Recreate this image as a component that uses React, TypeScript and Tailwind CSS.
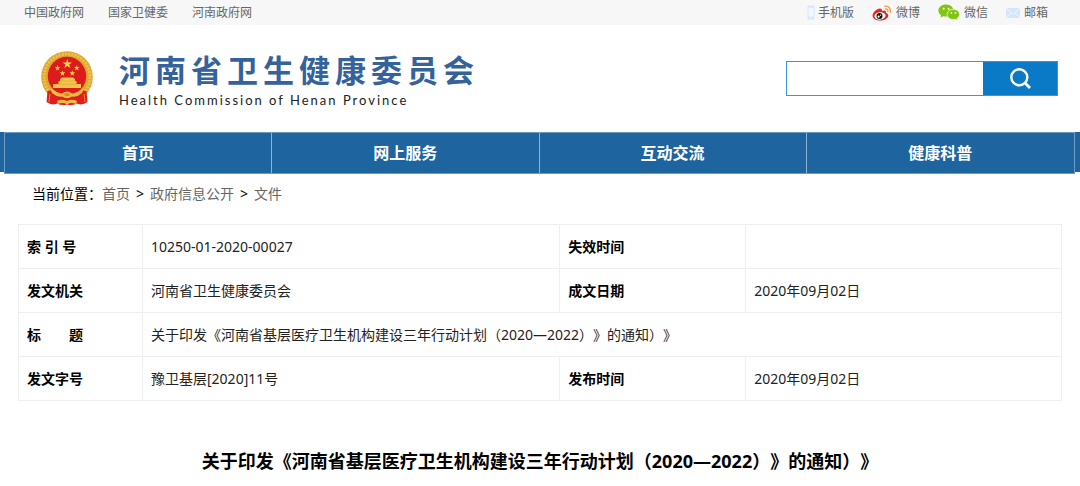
import React from "react";

const STAR = "0,-1 0.235,-0.324 0.951,-0.309 0.38,0.124 0.588,0.809 0,0.4 -0.588,0.809 -0.38,0.124 -0.951,-0.309 -0.235,-0.324";

function Star({ x, y, r }: { x: number; y: number; r: number }) {
  return <polygon points={STAR} transform={`translate(${x} ${y}) scale(${r})`} fill="#f8d648" />;
}

function Emblem() {
  return (
    <svg viewBox="0 0 52 55" className="h-[55px] w-[52px] shrink-0" aria-hidden="true">
      <circle cx="26" cy="26" r="25.8" fill="#dfa630" />
      <circle cx="26" cy="26" r="23" fill="none" stroke="#efc250" strokeWidth="3" strokeDasharray="2 1.2" />
      <circle cx="26" cy="25" r="19.2" fill="#dd1a1c" />
      <Star x={26.3} y={13} r={5} />
      <Star x={16.5} y={17} r={3} />
      <Star x={35.8} y={17} r={3} />
      <Star x={21.5} y={22.3} r={3} />
      <Star x={31.3} y={22.3} r={3} />
      <path d="M19 28 L21 26.500 H32 L34 28 V30 H35.500 V33 H40 V37 H12 V33 H17.500 V30 H19 Z" fill="#f2c64c" />
      <path d="M19 30 H34 M16 33.200 H37" stroke="#dca337" strokeWidth="0.6" />
      <path d="M6.500 40 Q12 38 17 43 L26 45 L35 43 Q40 38 45.500 40 L46.500 51 Q41 55 36 52.500 Q31 55 26 53.500 Q21 55 16 52.500 Q11 55 5.500 51 Z" fill="#de1f1d" />
      <path d="M9 37 Q16 42 21 42.500 Q26 38.500 31 42.500 Q36 42 43 37 L41 42 Q36 46.500 31 45.500 Q26 49 21 45.500 Q16 46.500 11 42 Z" fill="#ecbb42" />
      <path d="M22.500 43.500 Q26 41 29.500 43.500 Q26 47 22.500 43.500 Z" fill="#d4901f" />
      <path d="M16 50 Q21 47.500 26 50 Q31 47.500 36 50 L35 53 Q30 51 26 53.500 Q22 51 17 53 Z" fill="#edbd45" />
      <path d="M9 43 L8 51 M43 43 L44 51" stroke="#f0a53a" strokeWidth="0.8" />
    </svg>
  );
}

function PhoneIcon() {
  return (
    <svg viewBox="0 0 8 15" className="h-[15px] w-2" aria-hidden="true">
      <rect x="0.5" y="0.5" width="7" height="14" rx="1.5" fill="#d3e6fb" />
      <rect x="1.5" y="2.6" width="5" height="9" fill="#f4f8fd" />
      <circle cx="4" cy="13" r="0.7" fill="#f4f8fd" />
    </svg>
  );
}

function WeiboIcon() {
  return (
    <svg viewBox="0 0 20 16" className="h-4 w-5" aria-hidden="true">
      <path d="M7.7 3.6C5 3.6 0.6 7.4 0.6 10.7c0 2.9 3.4 4.8 7.2 4.8 4.900 0 8.500-2.500 8.500-5.100 0-1.500-1.200-2.300-2.400-2.700.6-1.700-.5-3-4-1.700.4-1.300-.3-2.400-2.200-2.400Z" fill="#dd2a24" />
      <ellipse cx="8" cy="10.900" rx="5.600" ry="3.700" fill="#fff" transform="rotate(-6 8 10.900)" />
      <circle cx="7.500" cy="11" r="3" fill="#111" />
      <circle cx="6.600" cy="11.700" r="1.100" fill="#fff" />
      <circle cx="8.600" cy="10.200" r="0.600" fill="#fff" />
      <path d="M12.900 1.200c3.400-.6 6.300 2.300 5.300 6M13.300 3.900c1.700-.3 3 1.100 2.500 2.700" fill="none" stroke="#f0a04b" strokeWidth="1.400" strokeLinecap="round" />
    </svg>
  );
}

function WechatIcon() {
  return (
    <svg viewBox="0 0 22 17" className="h-[17px] w-[22px]" aria-hidden="true">
      <path d="M8 .5C3.700.5.4 3.200.4 6.600c0 1.900 1 3.500 2.700 4.700l-.7 2.300 2.800-1.400c.9.200 1.800.4 2.800.4 4.200 0 7.600-2.700 7.600-6S12.200.5 8 .5Z" fill="#80c610" />
      <path d="M15.400 5.300c-3.500 0-6.200 2.300-6.200 5.100s2.700 5.200 6.200 5.200c.7 0 1.400-.1 2-.3l2.200 1.200-.6-1.900c1.500-1 2.500-2.500 2.500-4.200 0-2.800-2.700-5.100-6.100-5.100Z" fill="#80c610" stroke="#f7f7f7" strokeWidth="0.8" />
      <g fill="#fff">
        <circle cx="5.600" cy="4.700" r="1" />
        <circle cx="10.600" cy="4.700" r="1" />
        <circle cx="13.400" cy="8.900" r="0.900" />
        <circle cx="17.500" cy="8.900" r="0.900" />
      </g>
    </svg>
  );
}

function MailIcon() {
  return (
    <svg viewBox="0 0 14 10" className="h-[10px] w-[14px]" aria-hidden="true">
      <rect width="14" height="10" fill="#d3e6fb" />
      <path d="M0 .5 7 6 14 .5M0 9.500 5 5M14 9.500 9 5" fill="none" stroke="#f4f8fd" strokeWidth="0.900" />
    </svg>
  );
}

function SearchIcon() {
  return (
    <svg viewBox="0 0 21 21" className="h-[21px] w-[21px]" fill="none" stroke="#fff" strokeWidth="2.400" aria-hidden="true">
      <circle cx="9.300" cy="9.300" r="8" />
      <path d="M14.500 14.500 20 20" strokeWidth="2.800" />
    </svg>
  );
}

const portals = ["中国政府网", "国家卫健委", "河南政府网"];
const sections = ["首页", "网上服务", "互动交流", "健康科普"];
const docTitle = "关于印发《河南省基层医疗卫生机构建设三年行动计划（2020—2022）》的通知）》";

function Label({ children }: { children: React.ReactNode }) {
  return (
    <th scope="row" className="h-11 border border-[#efefef] px-2 text-left font-bold whitespace-pre text-black">
      {children}
    </th>
  );
}

function Value({ children, span }: { children?: React.ReactNode; span?: number }) {
  return (
    <td colSpan={span} className="h-11 border border-[#efefef] px-2">
      {children}
    </td>
  );
}

export default function App() {
  return (
    <div className="bg-white font-['Noto_Sans','Noto_Sans_CJK_SC',sans-serif] text-sm text-[#222] [text-spacing-trim:space-all]">
      <div className="flex h-[25px] items-center justify-between bg-[#f7f7f7] pr-8 pl-6 text-xs text-[#666]">
        <nav className="flex gap-6" aria-label="政府网站">
          {portals.map((name) => (
            <a key={name} href="#">{name}</a>
          ))}
        </nav>
        <div className="flex items-center gap-[18px]">
          <a href="#" className="flex items-center gap-[3px]"><PhoneIcon />手机版</a>
          <a href="#" className="flex items-center gap-1"><WeiboIcon />微博</a>
          <a href="#" className="flex items-center gap-1"><WechatIcon />微信</a>
          <a href="#" className="flex items-center gap-1"><MailIcon />邮箱</a>
        </div>
      </div>

      <header className="flex h-[107px] items-center justify-between pr-[22px] pl-[41px]">
        <a href="#" className="flex items-center gap-[26px]">
          <Emblem />
          <span className="flex flex-col gap-0.5">
            <span className="text-[31px] leading-10 font-bold tracking-[5px] text-[#34629b]">河南省卫生健康委员会</span>
            <span className="font-[Lato,sans-serif] text-[13px] leading-4 tracking-[2px]">Health Commission of Henan Province</span>
          </span>
        </a>
        <form className="flex h-[35px] w-[272px] border border-[#3d95d1]" onSubmit={(e) => e.preventDefault()}>
          <input type="search" aria-label="搜索" className="min-w-0 flex-1 bg-white px-2 outline-none" />
          <button type="submit" aria-label="搜索" className="flex w-[74px] items-center justify-center bg-[#0a7ac6]">
            <SearchIcon />
          </button>
        </form>
      </header>

      <nav className="h-10 bg-[#1e649f] px-1" aria-label="主导航">
        <ul className="mr-px grid h-[42px] grid-cols-4 border border-[#6c9cc4] bg-[#1e649f] text-base font-bold text-white">
          {sections.map((name) => (
            <li key={name} className="border-r border-[#8fb4d3] last:border-r-0">
              <a href="#" className="flex h-full items-center justify-center">{name}</a>
            </li>
          ))}
        </ul>
      </nav>

      <main className="px-[18px]">
        <div className="flex h-[52px] items-center gap-1.5 pb-2 pl-[14px] text-[#666]">
          <span>
            <span className="text-black">当前位置：</span>
            <a href="#">首页</a>
          </span>
          <span className="text-black">&gt;</span>
          <a href="#">政府信息公开</a>
          <span className="text-black">&gt;</span>
          <a href="#">文件</a>
        </div>

        <table className="w-full table-fixed border-collapse">
          <colgroup>
            <col className="w-[124px]" />
            <col className="w-[40%]" />
            <col className="w-[186px]" />
            <col />
          </colgroup>
          <tbody>
            <tr>
              <Label>索 引 号</Label>
              <Value>10250-01-2020-00027</Value>
              <Label>失效时间</Label>
              <Value />
            </tr>
            <tr>
              <Label>发文机关</Label>
              <Value>河南省卫生健康委员会</Value>
              <Label>成文日期</Label>
              <Value>2020年09月02日</Value>
            </tr>
            <tr>
              <Label>标　　题</Label>
              <Value span={3}>{docTitle}</Value>
            </tr>
            <tr>
              <Label>发文字号</Label>
              <Value>豫卫基层[2020]11号</Value>
              <Label>发布时间</Label>
              <Value>2020年09月02日</Value>
            </tr>
          </tbody>
        </table>

        <h1 className="pt-[46px] pb-3 text-center text-lg leading-7 font-bold text-black">{docTitle}</h1>
      </main>
    </div>
  );
}
